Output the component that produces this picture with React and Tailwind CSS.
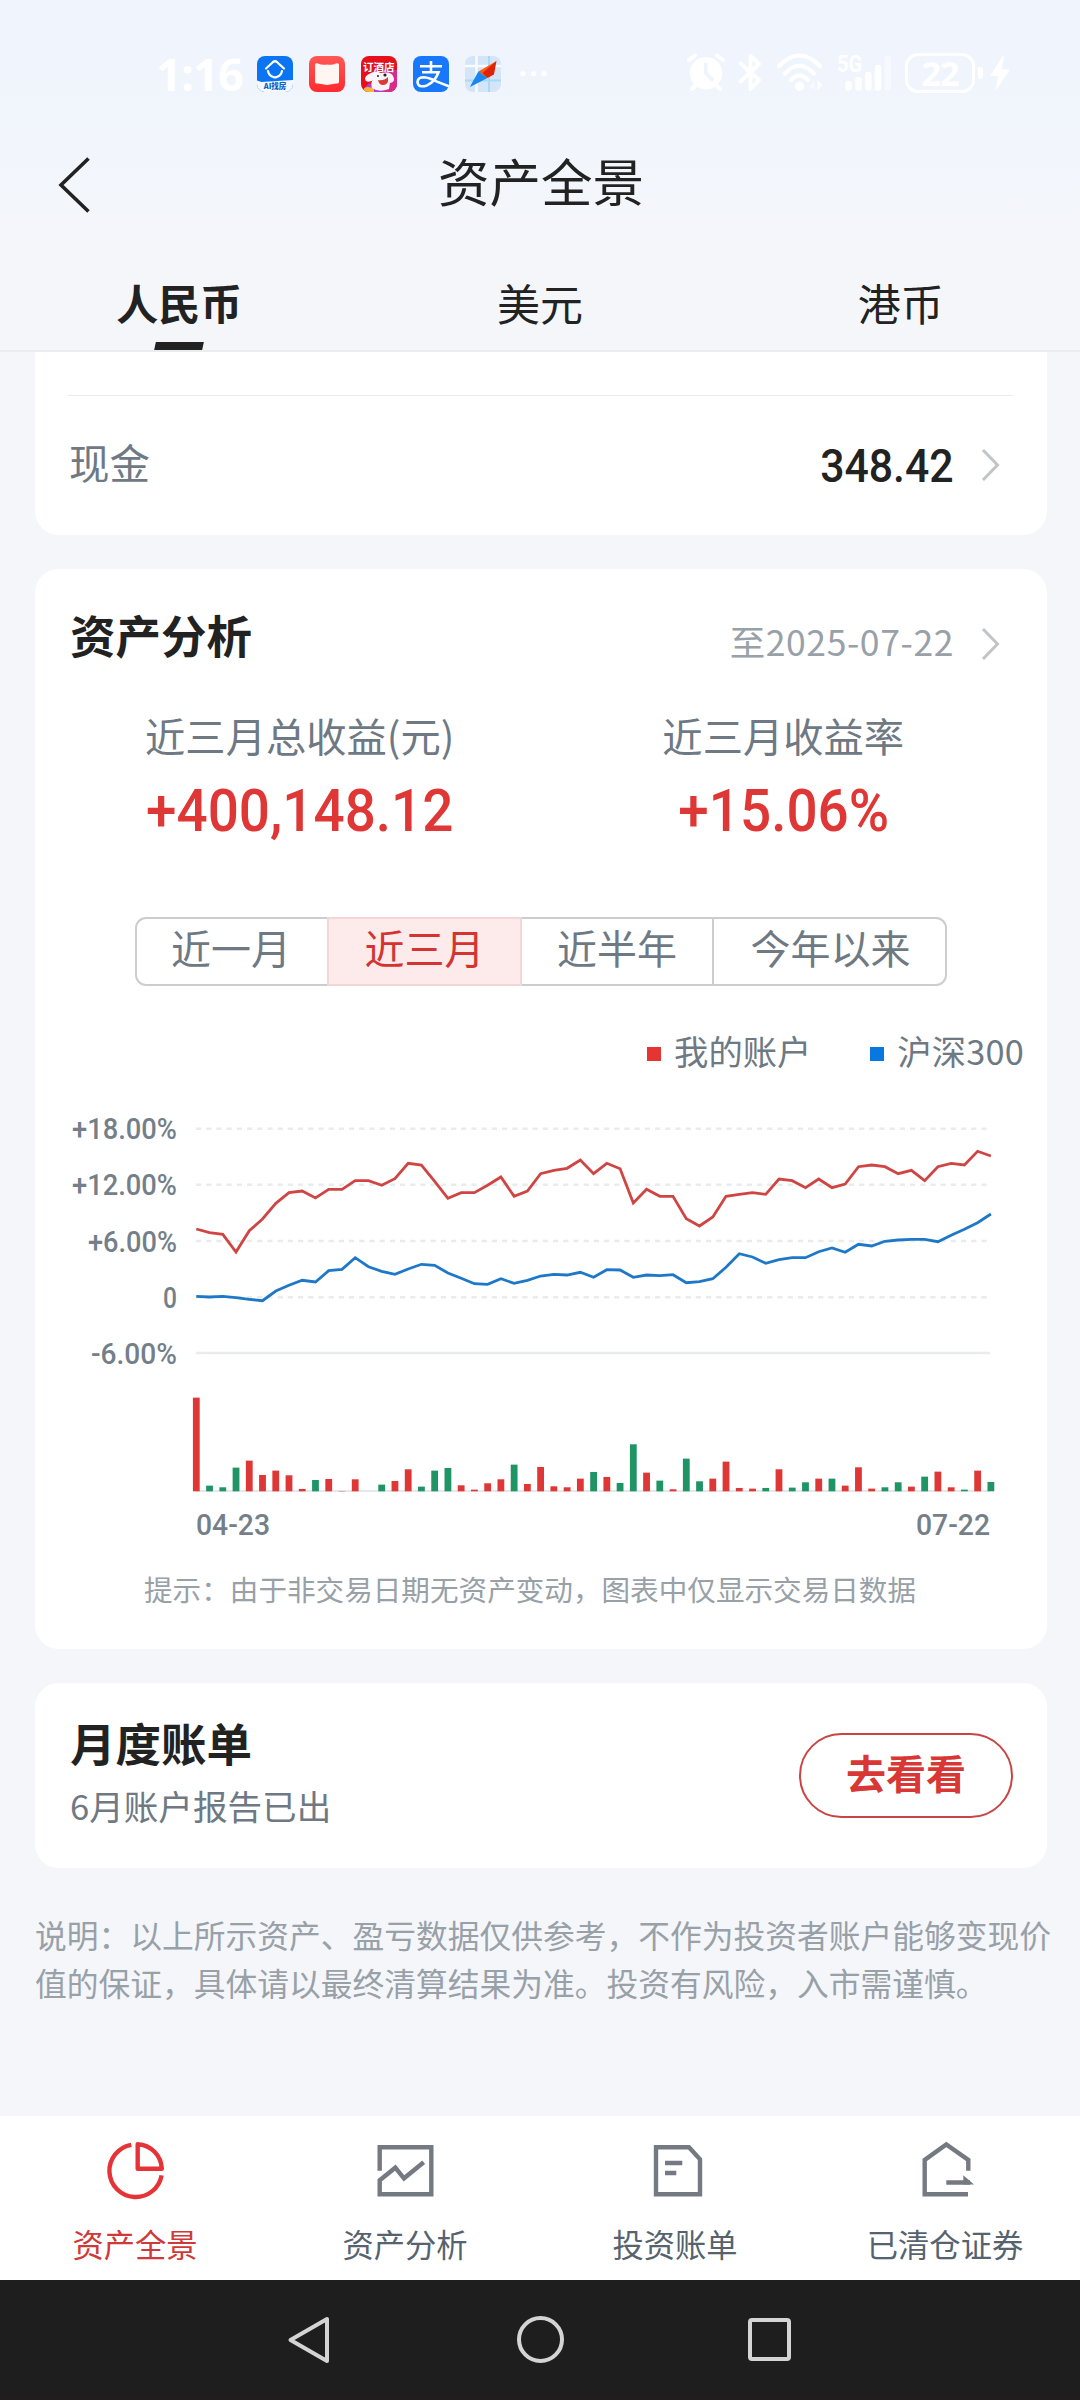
import React from "react";

const RETURNS = [
  657, 668, 673, 726, 662, 627, 580, 548, 543, 564, 538, 538, 512, 512, 526, 506, 460, 465, 514, 565, 548, 548, 526, 501, 559, 543, 491, 481, 475,
  450, 491, 460, 476, 579, 538, 559, 559, 626, 648, 621, 559, 553, 548, 553, 507, 512, 533, 507, 533, 522, 470, 465, 470, 491, 481, 512, 470, 460, 465, 424, 438,
];

const INDEX = [
  859, 861, 859, 863, 868, 872, 843, 826, 811, 816, 782, 778, 743, 770, 784, 793, 777, 763, 766, 789, 805, 821, 823, 806, 820, 811, 798, 793, 795, 787,
  802, 779, 780, 802, 795, 797, 794, 818, 815, 806, 772, 731, 741, 760, 749, 743, 743, 725, 714, 727, 703, 708, 694, 690, 688, 688, 695, 676, 658, 638, 612,
];

// Daily profit (positive) and loss (negative)
const DAILY = [
  281, -17, -12, -71, 92, 49, 62, 48, 7, -34, 37, 1, 36, 0, -20, 31, 66, -14, -62, -70, 18, 5, 24, 36, -80, 22, 73, 15, 12, 38, -58,
  43, -25, -141, 56, -32, 6, -98, -30, 38, 89, 10, 8, -10, 66, -11, -27, 38, -38, 17, 72, 8, -12, -27, 14, -44, 59, 12, -5, 62, -28,
];

const STEP = 13.243;
const X0 = 161.3;
const toPoints = (arr) => arr.map((v, i) => `${(X0 + i * STEP).toFixed(1)},${(v / 3 - 90).toFixed(1)}`).join(" ");

function Chart() {
  const rows = [
    ["+18.00%", 28.7, 105],
    ["+12.00%", 84.8, 105],
    ["+6.00%", 141, 89],
    ["0", 197.2, 14],
    ["-6.00%", 253, 86],
  ];
  return (
    <svg className="block h-[450px] w-[1012px]" viewBox="0 0 1012 450" fontFamily="Roboto, sans-serif" fontSize="29.5" fontWeight="500">
      {rows.map(([label, y, w], i) => (
        <g key={label}>
          <text x={142 - w} y={y + 10.5} fill="#747f89" textLength={w} lengthAdjust="spacingAndGlyphs">{label}</text>
          <line x1="161" x2="955" y1={y} y2={y} stroke="#e9ecec" strokeWidth="2.6" strokeDasharray={i < 4 ? "5.2 5" : undefined} />
        </g>
      ))}
      <line x1="161" x2="955" y1="391" y2="391" stroke="#e6e7e8" strokeWidth="2" />
      {DAILY.map((v, i) => (
        <rect key={i} x={X0 - 3.4 + i * STEP} y={391.3 - Math.abs(v) / 3} width="6.8" height={Math.abs(v) / 3} fill={v > 0 ? "#de3735" : "#1f9465"} />
      ))}
      <polyline points={toPoints(RETURNS)} fill="none" stroke="#cf4543" strokeWidth="2.8" />
      <polyline points={toPoints(INDEX)} fill="none" stroke="#1e78c8" strokeWidth="2.8" />
      <text x="161" y="435" fill="#747f89" textLength="74" lengthAdjust="spacingAndGlyphs">04-23</text>
      <text x="881" y="435" fill="#747f89" textLength="74" lengthAdjust="spacingAndGlyphs">07-22</text>
    </svg>
  );
}

function Chevron() {
  return (
    <svg className="ml-[27px] h-[34px] w-[20px]" viewBox="0 0 20 34" fill="none" stroke="#c0c5ca" strokeWidth="3">
      <path d="M2 2 L16.5 17 L2 32" />
    </svg>
  );
}

function StatusBar() {
  return (
    <div className="flex h-[148px] items-start text-white">
      <div className="ml-[156px] mt-[50px] w-[101px] whitespace-nowrap font-['Open_Sans'] text-[45px] font-bold leading-[48px] tracking-[-0.8px]">1:16</div>
      <div className="mt-[56px] flex gap-[16px]">
        <div className="relative h-9 w-9 overflow-hidden rounded-[8px] bg-[#0a74f2]">
          <svg className="h-9 w-9" viewBox="0 0 36 36" fill="none" stroke="#fff" strokeWidth="2.2" strokeLinecap="round" strokeLinejoin="round">
            <path d="M0 24.5 L4.5 26 L36 24 V36 H0Z" fill="#f4f8ff" stroke="none" />
            <path d="M9 12.5 L15.8 6.2 Q18 4.3 20.2 6.2 L27 12.5" />
            <path d="M11 15 Q12 20 16.5 21 Q18 21.8 19.5 21 Q24 20 25 15" />
          </svg>
          <span className="absolute left-0 top-[24px] w-9 text-center font-['Noto_Sans_CJK_SC'] text-[7.5px] font-black leading-[12px] text-[#0a62c8]">AI找房</span>
        </div>
        <svg className="h-9 w-9" viewBox="0 0 36 36">
          <defs><linearGradient id="book" x1="0" y1="0" x2="0" y2="1"><stop stopColor="#ff5854" /><stop offset="1" stopColor="#ff2a2e" /></linearGradient></defs>
          <rect width="36" height="36" rx="8" fill="url(#book)" />
          <path d="M6 8.5 Q7 6.5 9 7.5 Q13 9.5 18 8.5 Q23 9.5 27 7.5 Q29 6.5 30 8.5 V26 Q30 28 27 27.5 L18 29 L9 27.5 Q6 28 6 26Z" fill="#fff5f1" />
        </svg>
        <div className="relative h-9 w-9 overflow-hidden rounded-[8px] bg-[#e6101c]">
          <svg className="h-9 w-9" viewBox="0 0 36 36">
            <path d="M22 14 H36 V36 H20Z" fill="#d92a8e" />
            <path d="M0 36 L8 27 L24 36Z" fill="#b13adf" />
            <path d="M2 36 Q2 31 7 31 L13 32 V36Z" fill="#f9b52c" />
            <path d="M8 18 Q14 14 20 17 Q30 15 32 20 Q35 26 29 27 L28 33 Q18 37 11 32 Q9 25 13 24 Q5 28 4 23 Q4 20 8 18Z" fill="#f7f5f7" />
            <path d="M17 24 Q23 25 27 21 Q28 29 22 29 Q18 29 17 24Z" fill="#dc3a35" />
            <circle cx="17" cy="20" r="1" fill="#222" /><circle cx="24" cy="19" r="1.6" fill="#222" />
          </svg>
          <span className="absolute left-[2px] top-[4px] whitespace-nowrap font-['Noto_Sans_CJK_SC'] text-[10.5px] font-bold leading-[14px] text-white">订酒店</span>
        </div>
        <svg className="h-9 w-9" viewBox="0 0 36 36">
          <rect width="36" height="36" rx="8" fill="#1878fb" />
          <path d="M7 10.2 H29 M18 5 V16 M9 16.3 H25.5 Q22 26 14 29.4 Q5 32.3 4.5 26 Q4.8 21.3 11 21.3 Q16 21.6 24 25.6 L36 30.3" fill="none" stroke="#fff" strokeWidth="2.6" />
        </svg>
        <svg className="h-9 w-9" viewBox="0 0 36 36">
          <defs><clipPath id="mapClip"><rect width="36" height="36" rx="8" /></clipPath></defs>
          <g clipPath="url(#mapClip)">
            <rect width="36" height="36" fill="#d5e5f8" />
            <path d="M11.5 0 V36 M0 10 H36 " stroke="#f8fbff" strokeWidth="2.5" />
            <path d="M24 0 V36 M0 24.5 H36" stroke="#a8d9f7" strokeWidth="2" />
          </g>
          <path d="M31.5 5 L13.5 15.5 L22 22Z" fill="#ff5a1a" /><path d="M31.5 5 L29 18.5 L22.5 22 L17.5 17Z" fill="#de2408" />
          <path d="M5 31 L13.5 15.5 L17.5 19Z" fill="#1cb0fb" /><path d="M5 31 L13.5 15.5 L22.5 22Z" fill="#1b86ee" />
        </svg>
      </div>
      <svg className="ml-[18px] mt-[70px] h-[8px] w-[30px]" viewBox="0 0 30 8" fill="#fff">
        <circle cx="4" cy="3.6" r="2.6" /><circle cx="14.6" cy="3.6" r="2.6" /><circle cx="25" cy="3.6" r="2.6" />
      </svg>
      <div className="ml-auto mr-[69px] mt-[53px] flex h-[40px] items-start">
        <svg className="h-10 w-10" viewBox="0 0 40 40" fill="#fff" stroke="#fff" strokeLinecap="round">
          <path d="M3 7 L9 2.5 M31 2.5 L37 7 M9 33 L6 36 M31 33 L34 36" strokeWidth="4" />
          <path fillRule="evenodd" stroke="none" d="M20 4 a16.2 16.2 0 1 0 .01 0Z M18 10 h3.6 v9.5 l7 6.8 -2.6 2.6 -8 -7.6Z" />
        </svg>
        <svg className="ml-[12px] h-10 w-6" viewBox="0 0 24 40" fill="none" stroke="#fff" strokeWidth="3.8" strokeLinejoin="round" strokeLinecap="round">
          <path d="M2.5 10.5 L21 27 L12.5 36 V3 L21 11 L2.5 28.5" />
        </svg>
        <svg className="ml-[14px] h-10 w-[48px]" viewBox="0 0 48 40" fill="none" stroke="#fff" strokeWidth="4.2" strokeLinecap="round">
          <path d="M3 13 Q23.5 -8 44 13" /><path d="M9 20.5 Q23.5 5 38 20.5" /><path d="M15 27 Q23.5 18 32 27" />
          <circle cx="23.5" cy="33.3" r="4.6" fill="#fff" stroke="none" />
          <path d="M41.5 27 V37.5 L46.5 31.5Z" fill="#fff" stroke="none" /><path d="M38.5 37 V27 L33.5 34Z" fill="#f8faff" stroke="none" />
        </svg>
        <svg className="-mt-[8px] ml-[12px] h-12 w-[56px]" viewBox="0 -8 56 48" stroke="#fff" strokeWidth="6.4" strokeLinecap="round">
          <text x="1" y="18.5" fill="#fff" stroke="none" fontFamily="Roboto, sans-serif" fontWeight="700" fontSize="23" textLength="25" lengthAdjust="spacingAndGlyphs">5G</text>
          <path d="M12.5 31 V34.5 M22.5 27 V34.5 M32.3 22 V34.5 M42 15 V34.5" /><path d="M51.8 6 V34.5" stroke="#f6f9ff" />
        </svg>
        <div className="ml-[13px] flex h-[40px] w-[70px] items-center justify-center rounded-[13px] border-[3.5px] border-white font-['Open_Sans'] text-[34px] font-bold leading-none tracking-[-1px]">22</div>
        <div className="ml-[3px] mt-[14px] h-[12px] w-[5px] rounded-r-[4px] bg-white" />
        <svg className="ml-[6px] h-10 w-[22px]" viewBox="0 0 22 40" fill="#fff"><path d="M15 1.5 L1 23 H9 L6.5 38 L21 16.5 H13Z" /></svg>
      </div>
    </div>
  );
}

function Header() {
  return (
    <div className="relative flex h-[72px] items-center justify-center">
      <svg className="absolute left-[58px] top-[8px] h-[58px] w-[34px]" viewBox="0 0 34 58" fill="none" stroke="#222" strokeWidth="3.6"><path d="M30.5 2.5 L3 29 L30.5 55.5" /></svg>
      <h1 className="pb-[9px] pl-[2px] text-[51.5px] leading-[63px] text-[#222]">资产全景</h1>
    </div>
  );
}

function Tabs() {
  return (
    <div className="flex h-[132px] border-b-2 border-[#ebecee] pt-[50px] text-[42px] leading-[64px] text-[#222]">
      <div className="flex flex-1 flex-col items-center font-bold">
        人民币
        <div className="mt-[8px] h-[9px] w-[48px] -skew-x-[12deg] bg-[#222]" />
      </div>
      <div className="flex-1 pl-[2px] text-center text-[43px]">美元</div>
      <div className="flex-1 pl-[2px] text-center text-[43px]">港币</div>
    </div>
  );
}

function Segments() {
  const base = "flex h-full items-center justify-center pb-[10px]";
  return (
    <div className="mx-auto mt-[69px] flex h-[69px] w-[812px] overflow-hidden rounded-[11px] text-[40px] leading-[58px] text-[#6e7983] shadow-[inset_0_0_0_2px_#cbcdd0]">
      <div className={base + " w-[192px]"}>近一月</div>
      <div className={base + " w-[195px] border-2 border-[#f3d6d6] bg-[#fdebeb] text-[#d33432]"}>近三月</div>
      <div className={base + " w-[192px] border-r-2 border-[#cbcdd0]"}>近半年</div>
      <div className={base + " flex-1"}>今年以来</div>
    </div>
  );
}

function TabItem({ label, active, children }) {
  return (
    <div className={"flex flex-1 flex-col items-center pt-[19px] " + (active ? "text-[#cf3a38]" : "text-[#56636e]")}>
      <svg className="h-[72px] w-[72px]" viewBox="0 0 72 72" fill="none" stroke={active ? "#e63338" : "#757982"} strokeWidth="4.4">{children}</svg>
      <span className="mt-[14px] whitespace-nowrap text-[31.3px] leading-[46px]">{label}</span>
    </div>
  );
}

export default function App() {
  return (
    <div className="flex h-[2400px] w-[1080px] flex-col overflow-hidden bg-[#f4f6fa] font-['Noto_Sans_CJK_SC',sans-serif] text-[#222]">
      <div className="h-[352px] shrink-0 bg-linear-to-b from-[#f0f5fd] from-20% to-[#f4f6fa] to-70%">
        <StatusBar />
        <Header />
        <Tabs />
      </div>

      <section className="ml-[35px] mr-[33px] h-[183px] shrink-0 rounded-b-[24px] bg-white">
        <div className="ml-[33px] mr-[34px] h-[44px] border-b border-[#e9eaeb]" />
        <div className="flex h-[138px] items-center pl-[34px] pr-[46px]">
          <span className="flex-1 pb-[6px] text-[40.5px] text-[#6e7983]">现金</span>
          <span className="origin-right scale-x-[.91] pt-[2px] font-[Roboto] text-[47px] font-medium">348.42</span>
          <Chevron />
        </div>
      </section>

      <section className="ml-[35px] mr-[33px] mt-[34px] h-[1080px] shrink-0 rounded-[24px] bg-white">
        <div className="flex h-[136px] items-center pl-[35px] pr-[46px]">
          <h2 className="flex-1 pb-[5px] text-[45.5px] font-bold">资产分析</h2>
          <span className="pt-[7px] text-[35.5px] tracking-[0.6px] text-[#98a0a8]">至2025-07-22</span>
          <div className="pt-[14px]"><Chevron /></div>
        </div>
        <div className="ml-[23px] mr-[22px] grid grid-cols-2 text-center">
          <div className="text-[40.3px] leading-[60px] text-[#6e7983]">近三月总收益(元)</div>
          <div className="text-[40.3px] leading-[60px] text-[#6e7983]">近三月收益率</div>
          <div className="mt-[9px] scale-x-[.93] font-[Roboto] text-[59px] font-medium leading-[74px] text-[#de3735]">+400,148.12</div>
          <div className="mt-[9px] scale-x-[.93] font-[Roboto] text-[59px] font-medium leading-[74px] text-[#de3735]">+15.06%</div>
        </div>
        <Segments />
        <div className="mt-[40px] flex h-[50px] items-center justify-end pr-[23px] text-[34.3px] text-[#6e7983]">
          <i className="mr-[13px] mt-[6px] h-[14px] w-[14px] bg-[#e63434]" /><span>我的账户</span>
          <i className="ml-[59px] mr-[13px] mt-[6px] h-[14px] w-[14px] bg-[#0878e0]" /><span className="tracking-[0.2px]">沪深300</span>
        </div>
        <div className="mt-[24px]"><Chart /></div>
        <p className="mt-[17px] pl-[109px] text-[28.6px] leading-[44px] text-[#98a0a8]">提示：由于非交易日期无资产变动，图表中仅显示交易日数据</p>
      </section>

      <section className="ml-[35px] mr-[33px] mt-[34px] flex h-[185px] shrink-0 items-center rounded-[24px] bg-white pl-[35px] pr-[34px]">
        <div className="flex-1 pb-[11px]">
          <h2 className="text-[45.5px] font-bold leading-[70px]">月度账单</h2>
          <p className="text-[34.6px] leading-[56px] text-[#6e7983]">6月账户报告已出</p>
        </div>
        <button className="h-[85px] w-[214px] rounded-full border-2 border-[#c74644] pb-[7px] text-[40px] font-bold leading-none text-[#d93735]">去看看</button>
      </section>

      <p className="ml-[35px] mt-[42px] whitespace-nowrap text-[31.75px] leading-[48px] text-[#98a0a8]">
        说明：以上所示资产、盈亏数据仅供参考，不作为投资者账户能够变现价<br />值的保证，具体请以最终清算结果为准。投资有风险，入市需谨慎。
      </p>

      <nav className="mt-auto flex h-[164px] shrink-0 bg-white">
        <TabItem label="资产全景" active>
          <path d="M32.3 9.8 A26.3 26.3 0 1 0 62.6 40.3" /><path d="M38.7 9.2 V33.7 H62.8 A25.5 25.5 0 0 0 38.7 9.2Z" strokeLinejoin="round" />
        </TabItem>
        <TabItem label="资产分析"><path d="M10.7 35.7 V12.3 H62.3 V59.3 H10.7 V45.3 L26.3 32.7 L35 43.3 L54.7 27.3" /></TabItem>
        <TabItem label="投资账单"><path d="M17 12.3 H50 L61 24.3 V59.3 H17Z M26 28 H43.3 M26 38 H37.3" /></TabItem>
        <TabItem label="已清仓证券">
          <path d="M59 59.3 H15.7 V25 L37.3 9.5 L59.3 25 V35.7 M37.3 47.5 H61" /><path d="M54.3 40.3 L65 49.6 H54.3Z" fill="#757982" stroke="none" />
        </TabItem>
      </nav>

      <footer className="flex h-[120px] shrink-0 items-center justify-between border-b border-[#24191f] bg-[#1e1e1e] px-[286px]">
        <svg className="h-[50px] w-[46px]" viewBox="0 0 46 50" fill="none" stroke="#d4d4d4" strokeWidth="4" strokeLinejoin="round"><path d="M41 4 V46 L4.5 25Z" /></svg>
        <div className="h-[47px] w-[47px] rounded-full border-4 border-[#d4d4d4]" />
        <div className="mr-[3px] h-[43px] w-[43px] rounded-[4px] border-4 border-[#d4d4d4]" />
      </footer>
    </div>
  );
}
